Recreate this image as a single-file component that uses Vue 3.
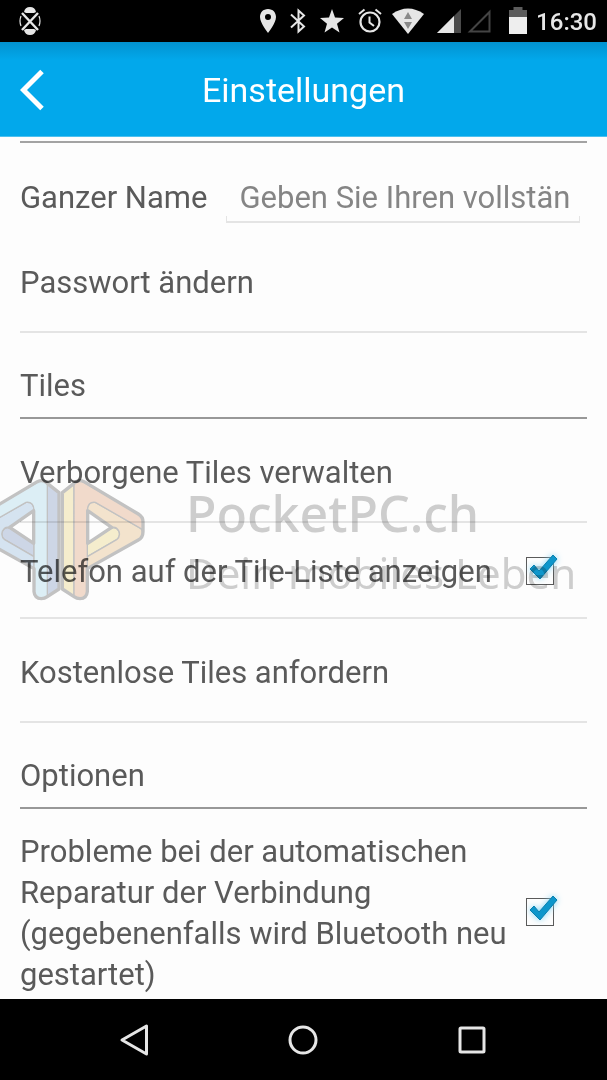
<script setup>
    import {ref} from 'vue';
    const fullName = ref("");
    const showPhone = ref(true);
    const autoRepair = ref(true);
</script>

<template>
    <div class="screen">
        <div class="status-bar">
            <svg class="debug" width="22" height="30" viewBox="0 0 22 30">
                <path d="M5 6Q6 1 11 1T17 6L15 7H7ZM5 24Q6 29 11 29T17 24L15 23H7Z" fill="#e6e6e6"/>
                <path d="M3 7L19 24M19 7L3 24" stroke="#e6e6e6" stroke-width="2.4"/>
                <path d="M2 10Q0 15 2 20M20 10Q22 15 20 20" fill="none" stroke="#e6e6e6" stroke-width="1.2"/>
            </svg>
            <svg class="pin" width="18" height="26" viewBox="0 0 18 26">
                <path fill-rule="evenodd" d="M9 1C4 1 1 4.600 1 9C1 15 9 25 9 25S17 15 17 9C17 4.600 14 1 9 1ZM9 6A3 3 0 1 1 9 12A3 3 0 1 1 9 6Z" fill="#e6e6e6"/>
            </svg>
            <svg class="bluetooth" width="16" height="26" viewBox="0 0 16 26">
                <path d="M1 6.500L14 18.500L8.500 23.500V2.500L14 7.500L1 19.500" fill="none" stroke="#e6e6e6" stroke-width="2"/>
            </svg>
            <svg class="star" width="26" height="26" viewBox="0 0 26 26">
                <path d="M13 1L16 9.600L25 10L18 15.700L20.500 24.500L13 19.500L5.500 24.500L8 15.700L1 10L10 9.600Z" fill="#e6e6e6"/>
            </svg>
            <svg class="alarm" width="24" height="26" viewBox="0 0 24 26">
                <circle cx="12" cy="14" r="9.500" fill="none" stroke="#e6e6e6" stroke-width="2.200"/>
                <path d="M1 6L6.500 1.500M17.500 1.500L23 6M11.500 8.500V14.500L16 18" fill="none" stroke="#e6e6e6" stroke-width="2"/>
            </svg>
            <svg class="wifi" width="32" height="26" viewBox="0 0 32 26">
                <path d="M0 6Q16 -5 32 6L16 26Z" fill="#e6e6e6"/>
                <path d="M16 4L20 11H12ZM16 21L12 14H20Z" fill="#8a8a8a"/>
            </svg>
            <svg class="signal" width="24" height="26" viewBox="0 0 24 26">
                <path d="M24 1V25H0Z" fill="#4a4a4a"/>
                <path d="M17 8V25H0Z" fill="#e6e6e6"/>
            </svg>
            <svg class="no-signal" width="24" height="26" viewBox="0 0 24 26">
                <path d="M22.500 4V23.500H3Z" fill="none" stroke="#444" stroke-width="2"/>
            </svg>
            <svg class="battery" width="18" height="28" viewBox="0 0 18 28">
                <path d="M0 3H4.500V0H13.500V3H18V10H0Z" fill="#5c5c5c"/>
                <path d="M0 10H18V27H0Z" fill="#eee"/>
            </svg>
            <time>16:30</time>
        </div>

        <header>
            <button class="back" type="button" aria-label="Zurück">
                <svg width="24" height="42" viewBox="0 0 24 42">
                    <path d="M22 2.500L3.500 21L22 39.500" fill="none" stroke="#fff" stroke-width="5"/>
                </svg>
            </button>
            <h1>Einstellungen</h1>
        </header>

        <main>
            <section class="account">
                <div class="name-row">
                    <label for="fullName">Ganzer Name</label>
                    <div class="field">
                        <input type="text" id="fullName" placeholder="Geben Sie Ihren vollständigen Namen ein" v-model="fullName"/>
                    </div>
                </div>
                <button class="row" type="button">Passwort ändern</button>
            </section>

            <section>
                <h2>Tiles</h2>
                <button class="row" type="button">Verborgene Tiles verwalten</button>
                <div class="row check-row compact">
                    <label for="showPhone">Telefon auf der Tile-Liste anzeigen</label>
                    <span class="check">
                        <input type="checkbox" id="showPhone" v-model="showPhone"/>
                        <svg v-if="showPhone" width="44" height="40" viewBox="0 0 44 40">
                            <path d="M10 20L14 16L19 22L33 6L37 10L20 30Z" fill="#0d96cb" stroke="#087fae" stroke-width="1"/>
                        </svg>
                    </span>
                </div>
                <button class="row" type="button">Kostenlose Tiles anfordern</button>
            </section>

            <section>
                <h2>Optionen</h2>
                <div class="row check-row last">
                    <label for="autoRepair">Probleme bei der automatischen Reparatur der Verbindung (gegebenenfalls wird Bluetooth neu gestartet)</label>
                    <span class="check">
                        <input type="checkbox" id="autoRepair" v-model="autoRepair"/>
                        <svg v-if="autoRepair" width="44" height="40" viewBox="0 0 44 40">
                            <path d="M10 20L14 16L19 22L33 6L37 10L20 30Z" fill="#0d96cb" stroke="#087fae" stroke-width="1"/>
                        </svg>
                    </span>
                </div>
            </section>

            <div class="watermark">
                <svg width="160" height="160" viewBox="0 0 480 480" stroke="#c4c4c4" stroke-linejoin="round">
                    <g stroke-width="4">
                        <path d="M222 72L187 98V387L222 410Z" fill="#f7efcf"/>
                        <path d="M262 250L332 206Q348 198 357 214Q362 230 350 239L262 290Z" fill="#f7efcf"/>
                        <path d="M262 152Q262 124 286 127L420 204Q430 210 426 226Q423 236 415 240L262 326V290L350 239Q362 230 357 214Q348 198 335 203L262 152Z" fill="#f5e5cf"/>
                        <path d="M222 72Q235 58 252 67L415 162Q428 172 428 185V209L286 127Q262 124 262 152V395Q260 417 240 417Q230 417 222 410Z" fill="#f3dccd"/>

                        <path d="M142 72L177 98V387L142 410Z" fill="#cfd8e8"/>
                        <path d="M102 250L32 206Q16 198 7 214Q2 230 14 239L102 290Z" fill="#cfd8e8"/>
                        <path d="M102 152Q102 124 78 127L-56 204Q-66 210 -62 226Q-59 236 -51 240L102 326V290L14 239Q2 230 7 214Q16 198 29 203L102 152Z" fill="#d7e5f2"/>
                        <path d="M142 72Q129 58 112 67L-51 162Q-64 172 -64 185V209L78 127Q102 124 102 152V395Q104 417 124 417Q134 417 142 410Z" fill="#def0f7"/>
                    </g>
                    <g fill="none" stroke-width="10">
                        <path d="M187 98L222 70Q235 57 252 65L415 162Q429 171 429 185V215Q429 232 415 240L262 326V395Q260 416 240 416Q230 416 222 410L187 387Z"/>
                        <path d="M177 98L142 70Q129 57 112 65L-51 162Q-65 171 -65 185V215Q-65 232 -51 240L102 326V395Q104 416 124 416Q134 416 142 410L177 387Z"/>
                        <path d="M263 152L335 202L263 250ZM101 152L29 202L101 250Z"/>
                    </g>
                </svg>
                <div class="brand">
                    <span class="site">PocketPC.ch</span>
                    <span class="slogan">Dein mobiles Leben</span>
                </div>
            </div>
        </main>

        <nav>
            <button type="button" aria-label="Zurück">
                <svg width="34" height="36" viewBox="0 0 34 36">
                    <path d="M29.500 4V32L5 18Z" fill="none" stroke="#e6e6e6" stroke-width="3" stroke-linejoin="round"/>
                </svg>
            </button>
            <button type="button" aria-label="Startseite">
                <svg width="34" height="36" viewBox="0 0 34 36">
                    <circle cx="17" cy="18" r="13" fill="none" stroke="#e6e6e6" stroke-width="3"/>
                </svg>
            </button>
            <button type="button" aria-label="Übersicht">
                <svg width="34" height="36" viewBox="0 0 34 36">
                    <rect x="5" y="6" width="24" height="24" rx="1" fill="none" stroke="#e6e6e6" stroke-width="3"/>
                </svg>
            </button>
        </nav>
    </div>
</template>

<style>
    body {
        margin: 0;
        background: #000;
    }
</style>

<style scoped>
    .screen {
        display: flex;
        flex-direction: column;
        min-height: 100vh;
        font-family: Roboto, "Liberation Sans", sans-serif;
        font-size: 31px;
        line-height: 40px;
        color: #5a5a5a;
    }

    button {
        background: none;
        border: 0;
        color: inherit;
        cursor: pointer;
        font: inherit;
        padding: 0;
        text-align: left;
    }

    svg {
        display: block;
        flex: none;
    }

    .status-bar {
        align-items: center;
        background: #000;
        box-sizing: border-box;
        color: #e6e6e6;
        display: flex;
        height: 42px;
        padding: 0 10px 0 19px;
    }
    .debug {
        margin-right: auto;
    }
    .bluetooth {
        margin-left: 13px;
    }
    .star {
        margin-left: 13px;
    }
    .alarm {
        margin-left: 13px;
    }
    .wifi {
        margin-left: 10px;
    }
    .signal {
        margin-left: 13px;
    }
    .no-signal {
        margin-left: 6px;
    }
    .battery {
        margin-left: 18px;
    }
    time {
        font-size: 24px;
        font-weight: 500;
        margin-left: 9px;
        padding-top: 2px;
    }

    header {
        align-items: center;
        background: linear-gradient(#0292d0, #02a8eb 18px);
        border-bottom: 1px solid #4cc0ef;
        box-sizing: border-box;
        color: #fff;
        display: grid;
        grid-template-columns: 60px 1fr 60px;
        height: 95px;
        padding-top: 2px;
    }
    .back {
        padding-left: 20px;
    }
    h1 {
        font-size: 34px;
        font-weight: 400;
        margin: 0;
        text-align: center;
    }

    main {
        background: #fdfdfd;
        flex: 1;
        overflow: hidden;
        padding: 4px 20px 0;
        position: relative;
    }
    .account {
        border-top: 2px solid #a3a3a3;
    }
    .name-row {
        align-items: center;
        display: flex;
        padding: 35px 7px 0 0;
    }
    .name-row label {
        flex: none;
        margin-right: 19px;
    }
    .field {
        border-bottom: 2px solid #e4e4e4;
        flex: 1;
        margin-bottom: -5px;
        min-width: 0;
        padding: 0 11px 3px 13px;
        position: relative;
    }
    .field::after {
        border: solid #e4e4e4;
        border-width: 0 1px;
        bottom: 0;
        content: "";
        height: 5px;
        left: 0;
        pointer-events: none;
        position: absolute;
        right: 0;
    }
    .field input {
        background: none;
        border: 0;
        color: inherit;
        display: block;
        font: inherit;
        height: 40px;
        outline: none;
        padding: 0;
        width: 100%;
    }
    .field input::placeholder {
        color: #858585;
    }

    .row {
        border-bottom: 2px solid #e4e4e4;
        display: block;
        padding: 34px 0 28px;
        width: 100%;
    }
    .account .row {
        padding: 45px 0 28px;
    }
    .check-row {
        align-items: center;
        display: flex;
    }
    .check-row label {
        flex: 1;
    }
    .compact {
        padding: 29px 0 25px;
    }
    .last {
        border: 0;
        line-height: 41px;
        padding: 22px 0 4px;
    }
    h2 {
        border-bottom: 2px solid #989898;
        font-size: 31px;
        font-weight: 400;
        margin: 0;
        padding: 33px 0 11px;
    }

    .check {
        flex: none;
        height: 28px;
        margin: 0 33px 3px 15px;
        position: relative;
        width: 28px;
    }
    .check input {
        appearance: none;
        border: 1px solid #5a5a5a;
        box-sizing: border-box;
        display: block;
        height: 28px;
        margin: 0;
        width: 28px;
    }
    .check svg {
        filter: drop-shadow(0 0 3px #7fd4f5);
        left: -6px;
        pointer-events: none;
        position: absolute;
        top: -8px;
    }

    .watermark {
        display: flex;
        left: 0;
        mix-blend-mode: multiply;
        pointer-events: none;
        position: absolute;
        top: 323px;
    }
    .brand {
        color: #cfcfcf;
        display: flex;
        flex-direction: column;
        font-family: "Noto Sans", "Open Sans", sans-serif;
        line-height: 60px;
        padding: 23px 0 0 26px;
        white-space: nowrap;
    }
    .site {
        font-size: 50px;
        font-weight: 500;
    }
    .slogan {
        font-size: 42px;
    }

    nav {
        background: #000;
        box-sizing: border-box;
        display: grid;
        grid-template-columns: repeat(3, 1fr);
        height: 81px;
        padding: 0 51px 0 50px;
    }
    nav button {
        align-items: center;
        display: flex;
        justify-content: center;
    }
</style>
